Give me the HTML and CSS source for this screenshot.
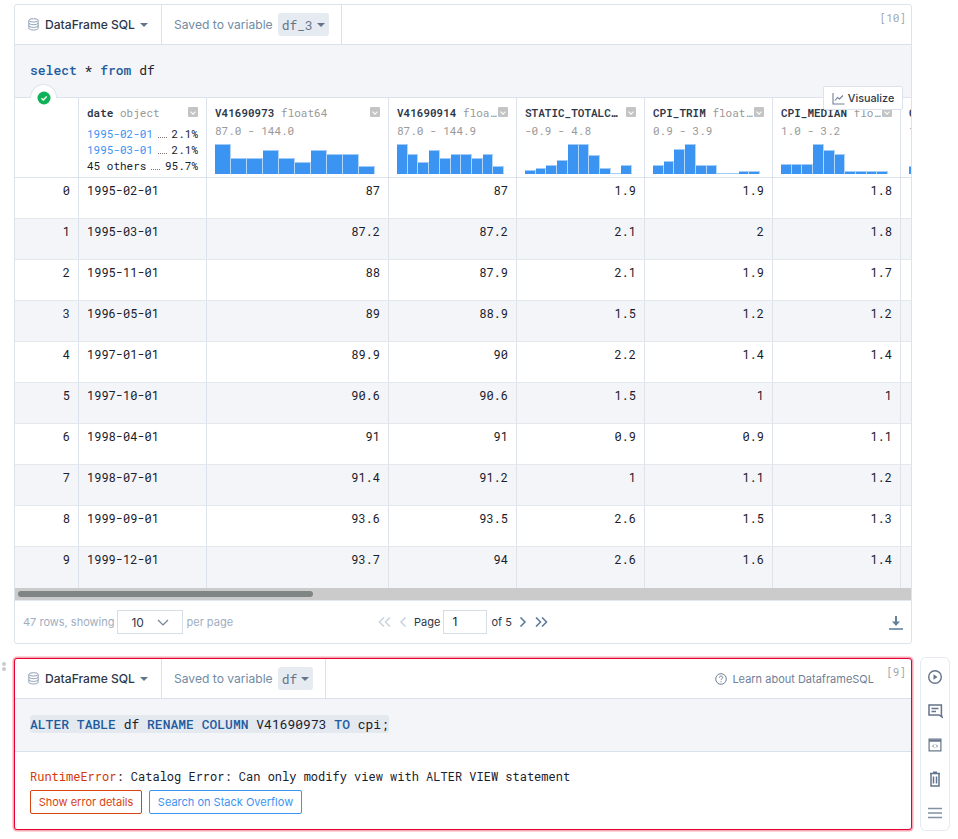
FILE: index.html
```html
<!DOCTYPE html>
<html lang="en">
<head>
<meta charset="utf-8">
<title>DataFrame SQL</title>
<link rel="stylesheet" href="styles.css">
</head>
<body>
<main class="notebook">
  <section class="cell">
    <header class="cell-head">
      <div class="head-part type-part">
        <svg class="db-icon" width="11" height="13" viewBox="0 0 13 15" fill="none" stroke="#8a9bb0" stroke-width="1.100"><ellipse cx="6.500" cy="2.600" rx="5.500" ry="2"/><path d="M1 2.600v9.400c0 1.100 2.400 2 5.500 2s5.500-.9 5.500-2V2.600M1 5.700c0 1.100 2.400 2 5.500 2s5.500-.9 5.500-2M1 8.900c0 1.100 2.400 2 5.500 2s5.500-.9 5.500-2"/></svg>
        <span class="type-name">DataFrame SQL</span><span class="caret wide"></span>
      </div>
      <div class="head-part var-part">
        <span class="var-label">Saved to variable</span>
        <span class="var-pill">df_3<span class="caret"></span></span>
      </div>
      <span class="exec-count">[10]</span>
    </header>
    <div class="code"><span class="kw">select</span> * <span class="kw">from</span> df</div>
    <div class="output">
      <span class="status-tab"><svg width="14" height="14" viewBox="0 0 14 14"><circle cx="7" cy="7" r="6.500" fill="#0fb257"/><path d="M4.400 7.200l1.900 1.800 3.400-3.600" fill="none" stroke="#fff" stroke-width="1.400"/></svg></span>
      <button class="visualize"><svg width="13" height="13" viewBox="0 0 13 13" fill="none" stroke="#718096" stroke-width="1.100"><path d="M1 1v11h11.500M3 8.500l2.500-3 2 1.500L11 3.500"/></svg>Visualize</button>
      <div class="table-clip">
        <table class="grid">
          <colgroup><col class="c-idx"><col class="c-date"><col class="c-wide"><col class="c-n"><col class="c-n"><col class="c-n"><col class="c-n"><col class="c-n"></colgroup>
          <thead>
            <tr>
              <th></th>
              <th>
                <div class="th-title"><span class="col-name">date</span> <span class="col-type">object</span><span class="sort"></span></div>
                <div class="freq link"><span>1995-02-01</span><i></i><span class="pct">2.1%</span></div>
                <div class="freq link"><span>1995-03-01</span><i></i><span class="pct">2.1%</span></div>
                <div class="freq"><span>45 others</span><i></i><span class="pct">95.7%</span></div>
              </th>
              <th>
                <div class="th-title"><span class="col-name">V41690973</span> <span class="col-type">float64</span><span class="sort"></span></div>
                <div class="range">87.0 - 144.0</div>
                <div class="hist"><b style="height:30px"></b><b style="height:16px"></b><b style="height:16px"></b><b style="height:24px"></b><b style="height:16px"></b><b style="height:12px"></b><b style="height:24px"></b><b style="height:20px"></b><b style="height:20px"></b><b style="height:8px"></b></div>
              </th>
              <th>
                <div class="th-title"><span class="col-name">V41690914</span> <span class="col-type">floa…</span><span class="sort"></span></div>
                <div class="range">87.0 - 144.9</div>
                <div class="hist"><b style="height:30px"></b><b style="height:20px"></b><b style="height:12px"></b><b style="height:24px"></b><b style="height:16px"></b><b style="height:20px"></b><b style="height:20px"></b><b style="height:16px"></b><b style="height:20px"></b><b style="height:8px"></b></div>
              </th>
              <th>
                <div class="th-title"><span class="col-name">STATIC_TOTALC…</span><span class="sort"></span></div>
                <div class="range">-0.9 - 4.8</div>
                <div class="hist"><b style="height:4px"></b><b style="height:6px"></b><b style="height:9px"></b><b style="height:14px"></b><b style="height:30px"></b><b style="height:30px"></b><b style="height:19px"></b><b style="height:6px"></b><b style="height:1px"></b><b style="height:9px"></b></div>
              </th>
              <th>
                <div class="th-title"><span class="col-name">CPI_TRIM</span> <span class="col-type">float…</span><span class="sort"></span></div>
                <div class="range">0.9 - 3.9</div>
                <div class="hist"><b style="height:9px"></b><b style="height:13px"></b><b style="height:25px"></b><b style="height:30px"></b><b style="height:9px"></b><b style="height:9px"></b><b style="height:1px"></b><b style="height:1px"></b><b style="height:3px"></b><b style="height:3px"></b></div>
              </th>
              <th>
                <div class="th-title"><span class="col-name">CPI_MEDIAN</span> <span class="col-type">flo…</span><span class="sort"></span></div>
                <div class="range">1.0 - 3.2</div>
                <div class="hist"><b style="height:10px"></b><b style="height:10px"></b><b style="height:10px"></b><b style="height:30px"></b><b style="height:24px"></b><b style="height:20px"></b><b style="height:3px"></b><b style="height:3px"></b><b style="height:3px"></b><b style="height:3px"></b></div>
              </th>
              <th>
                <div class="th-title"><span class="col-name">CPI_COMMON</span></div>
                <div class="range">1.0 - 3.2</div>
                <div class="hist"><b style="height:8px"></b></div>
              </th>
            </tr>
          </thead>
          <tbody>
            <tr><td>0</td><td class="l">1995-02-01</td><td>87</td><td>87</td><td>1.9</td><td>1.9</td><td>1.8</td><td></td></tr>
            <tr><td>1</td><td class="l">1995-03-01</td><td>87.2</td><td>87.2</td><td>2.1</td><td>2</td><td>1.8</td><td></td></tr>
            <tr><td>2</td><td class="l">1995-11-01</td><td>88</td><td>87.9</td><td>2.1</td><td>1.9</td><td>1.7</td><td></td></tr>
            <tr><td>3</td><td class="l">1996-05-01</td><td>89</td><td>88.9</td><td>1.5</td><td>1.2</td><td>1.2</td><td></td></tr>
            <tr><td>4</td><td class="l">1997-01-01</td><td>89.9</td><td>90</td><td>2.2</td><td>1.4</td><td>1.4</td><td></td></tr>
            <tr><td>5</td><td class="l">1997-10-01</td><td>90.6</td><td>90.6</td><td>1.5</td><td>1</td><td>1</td><td></td></tr>
            <tr><td>6</td><td class="l">1998-04-01</td><td>91</td><td>91</td><td>0.9</td><td>0.9</td><td>1.1</td><td></td></tr>
            <tr><td>7</td><td class="l">1998-07-01</td><td>91.4</td><td>91.2</td><td>1</td><td>1.1</td><td>1.2</td><td></td></tr>
            <tr><td>8</td><td class="l">1999-09-01</td><td>93.6</td><td>93.5</td><td>2.6</td><td>1.5</td><td>1.3</td><td></td></tr>
            <tr><td>9</td><td class="l">1999-12-01</td><td>93.7</td><td>94</td><td>2.6</td><td>1.6</td><td>1.4</td><td></td></tr>
          </tbody>
        </table>
      </div>
      <div class="scroll-track"><div class="scroll-thumb"></div></div>
      <footer class="pager">
        <div class="pager-left">
          <span class="muted">47 rows, showing</span>
          <span class="select">10<svg width="12" height="7" viewBox="0 0 12 7" fill="none" stroke="#718096" stroke-width="1.200"><path d="M1 1l5 5 5-5"/></svg></span>
          <span class="muted">per page</span>
        </div>
        <div class="pager-mid">
          <svg class="off" width="14" height="10" viewBox="0 0 14 10"><path d="M6 .5L1.500 5 6 9.500M12 .5L7.500 5l4.500 4.500"/></svg>
          <svg class="off" width="8" height="10" viewBox="0 0 8 10"><path d="M6.500 .5L2 5l4.500 4.500"/></svg>
          <span class="page-word">Page</span>
          <span class="page-input">1</span>
          <span class="page-word">of 5</span>
          <svg class="on" width="8" height="10" viewBox="0 0 8 10"><path d="M1.500 .5L6 5 1.500 9.500"/></svg>
          <svg class="on" width="14" height="10" viewBox="0 0 14 10"><path d="M2 .5L6.500 5 2 9.500M8 .5L12.500 5 8 9.500"/></svg>
        </div>
        <svg class="download" width="14" height="15" viewBox="0 0 14 15"><path d="M7 1v8.500" stroke="#64809c" stroke-width="2" fill="none"/><path d="M3 6.500h8L7 11z" fill="#64809c"/><path d="M0 14h14" stroke="#64809c" stroke-width="1.600"/></svg>
      </footer>
    </div>
  </section>

  <section class="cell cell-error">
    <span class="drag"><i></i><i></i></span>
    <header class="cell-head">
      <div class="head-part type-part">
        <svg class="db-icon" width="11" height="13" viewBox="0 0 13 15" fill="none" stroke="#8a9bb0" stroke-width="1.100"><ellipse cx="6.500" cy="2.600" rx="5.500" ry="2"/><path d="M1 2.600v9.400c0 1.100 2.400 2 5.500 2s5.500-.9 5.500-2V2.600M1 5.700c0 1.100 2.400 2 5.500 2s5.500-.9 5.500-2M1 8.900c0 1.100 2.400 2 5.500 2s5.500-.9 5.500-2"/></svg>
        <span class="type-name">DataFrame SQL</span><span class="caret wide"></span>
      </div>
      <div class="head-part var-part">
        <span class="var-label">Saved to variable</span>
        <span class="var-pill">df<span class="caret"></span></span>
      </div>
      <a class="learn"><svg width="12" height="12" viewBox="0 0 12 12" fill="none" stroke="#718096" stroke-width="1"><circle cx="6" cy="6" r="5.300"/><path d="M4.300 4.700c0-1 .8-1.600 1.700-1.600s1.700.6 1.700 1.500c0 1.200-1.700 1.200-1.700 2.500M6 8.300v1"/></svg>Learn about DataframeSQL</a>
      <span class="exec-count">[9]</span>
    </header>
    <div class="code"><span class="sel"><span class="kw">ALTER</span> <span class="kw">TABLE</span> df <span class="kw">RENAME</span> <span class="kw">COLUMN</span> V41690973 <span class="kw">TO</span> cpi;</span></div>
    <div class="error-out">
      <div class="err-msg"><span class="err-name">RuntimeError</span>: Catalog Error: Can only modify view with ALTER VIEW statement</div>
      <div class="err-actions">
        <button class="btn btn-red">Show error details</button>
        <button class="btn btn-blue">Search on Stack Overflow</button>
      </div>
    </div>
    <aside class="toolbar">
      <svg width="16" height="16" viewBox="0 0 16 16" fill="none" stroke="#64748b" stroke-width="1.400"><circle cx="8" cy="8" r="6.300"/><path d="M6.500 5.300L10.500 8l-4 2.700z" fill="#64748b" stroke="none"/></svg>
      <svg width="16" height="16" viewBox="0 0 16 16" fill="none" stroke="#64748b" stroke-width="1.500"><path d="M2 2h12.400v10l.6 2-3-2H2z"/><path d="M4.500 5.500h7M4.500 8.500h4.500"/></svg>
      <svg width="16" height="16" viewBox="0 0 16 16" fill="none" stroke="#64748b" stroke-width="1.200"><rect x="2.100" y="2.100" width="11.800" height="11.800"/><path d="M2.100 3.700h11.800" stroke-width="2"/><path d="M7 7.500L5.500 9 7 10.500M9 7.500L10.500 9 9 10.500" stroke-width=".9"/></svg>
      <svg width="16" height="16" viewBox="0 0 16 16" fill="none" stroke="#64748b" stroke-width="1.500"><path d="M4 3v12h8V3M3 2.500h10M6 1.200h4M6.500 5.500v7M9.500 5.500v7"/></svg>
      <svg width="16" height="16" viewBox="0 0 16 16" fill="none" stroke="#8291a3" stroke-width="1.600"><path d="M1 3.500h14M1 8h14M1 12.500h14"/></svg>
    </aside>
  </section>
</main>
</body>
</html>
```
FILE: styles.css
```css
* { box-sizing: border-box; }
html, body { margin: 0; padding: 0; background: #fff; }
body { width: 958px; height: 839px; overflow: hidden; font-family: Inter, "Noto Sans", sans-serif; color: #1a202c; }
.notebook { display: flex; flex-direction: column; gap: 14px; padding: 4px 0 0 14px; width: 912px; }
.cell { position: relative; border: 1px solid #dde3ec; border-radius: 3px; background: #fff; }
.cell-error { border-color: #e1002f; box-shadow: 0 0 0 1.500px #f8a9b5; }
.cell-head { display: flex; align-items: stretch; height: 40px; border-bottom: 1px solid #d9e1ea; position: relative; }
.head-part { display: flex; align-items: center; border-right: 1px solid #d9e1ea; font-size: 12.100px; }
.type-part { width: 147px; padding-left: 13px; }
.db-icon { margin-right: 6px; flex: none; }
.type-name { font-weight: 500; color: #2d3748; white-space: nowrap; }
.caret { display: inline-block; width: 0; height: 0; border: 4px solid transparent; border-top: 4px solid #64748b; border-bottom: 0; margin-left: 4px; }
.caret.wide { margin-left: 5px; }
.var-part { padding: 0 12px; }
.var-label { color: #718ba3; white-space: nowrap; }
.var-pill { display: flex; align-items: center; height: 23px; padding: 0 4px; margin-left: 5px; background: #e6ebf1; border-radius: 3px; font-family: "Roboto Mono", "DejaVu Sans Mono", "Liberation Mono", monospace; font-size: 13px; color: #64748b; white-space: nowrap; }
.exec-count { position: absolute; top: 5px; right: 5px; font-family: "Roboto Mono", "DejaVu Sans Mono", monospace; font-size: 11px; color: #a3a9b0; }
.code { height: 52px; padding: 17px 0 0 15px; background: #f3f5f8; font-family: "Roboto Mono", "DejaVu Sans Mono", monospace; font-size: 13px; line-height: 16px; color: #1a202c; white-space: pre; }
.kw { color: #1f5c9f; font-weight: 500; }
.sel { display: inline-block; background: #e4e9f0; border-radius: 3px; line-height: 18px; margin-top: -1px; }
.output { position: relative; }
.status-tab { position: absolute; z-index: 2; left: 15px; top: -13px; width: 27px; height: 14px; background: #fff; border: 1px solid #dde3ec; border-bottom: 0; border-radius: 14px 14px 0 0; }
.status-tab svg { position: absolute; left: 6px; top: 6px; }
.visualize { position: absolute; z-index: 3; top: -11px; right: 8px; width: 80px; height: 24px; display: flex; align-items: center; justify-content: center; gap: 3px; padding: 0; background: #fff; border: 1px solid #dde3ec; border-radius: 2px; font-family: Inter, sans-serif; font-size: 10.800px; font-weight: 500; color: #2d3748; }
.table-clip { width: 896px; overflow: hidden; }
.grid { width: 914px; table-layout: fixed; border-collapse: separate; border-spacing: 0; font-family: "Roboto Mono", "DejaVu Sans Mono", monospace; }
.c-idx { width: 64px; } .c-date { width: 128px; } .c-wide { width: 182px; } .c-n { width: 128px; }
.grid th { height: 81px; padding: 7px 8px 0; vertical-align: top; text-align: left; font-weight: 400; border-top: 1px solid #dde3ec; border-bottom: 1px solid #dde3ec; border-right: 1px solid #dde3ec; font-size: 11px; overflow: hidden; }
.grid td { height: 41px; padding: 4px 8px 0; vertical-align: top; text-align: right; font-size: 12px; line-height: 16px; color: #1a202c; border-bottom: 1px solid #e3e8ef; border-right: 1px solid #dde3ec; }
.grid td.l { text-align: left; }
.grid tbody tr:nth-child(even) td { background: #f3f5f8; }
.grid tbody tr:last-child td { border-bottom: 0; }
.th-title { position: relative; white-space: nowrap; height: 16px; line-height: 15px; margin-bottom: 2px; overflow: hidden; }
.col-name { font-weight: 600; color: #2d3748; }
.col-type { color: #999; }
.sort { position: absolute; right: 0; top: 2px; width: 10px; height: 10px; background: #c4c4c4; border-radius: 1px; }
.sort::after { content: ""; position: absolute; left: 2.500px; top: 2.500px; width: 3px; height: 3px; border-right: 1px solid #fff; border-bottom: 1px solid #fff; transform: rotate(45deg); }
.range { color: #999; height: 16px; line-height: 16px; margin-bottom: 5px; white-space: nowrap; }
.hist { display: flex; align-items: flex-end; height: 30px; width: 160px; }
.hist b { flex: 1; display: block; background: #3b93f2; border-top: 1px solid #a0cbf8; border-right: 1px solid #b5d7fa; }
.grid th:nth-child(n+4) .hist { width: 107px; }
.grid th:nth-child(8) .hist b { flex: none; width: 11px; }
.freq { display: flex; align-items: baseline; height: 16px; line-height: 16px; color: #1a202c; white-space: nowrap; }
.th-title + .freq { margin-top: 5px; }
.freq i { flex: 1; margin: 0 5px; border-bottom: 1px dotted #777; height: 10px; }
.freq.link span:first-child { color: #3b93f2; }
.scroll-track { height: 12px; background: #cbcbcb; padding: 3px; }
.scroll-thumb { width: 295px; height: 6px; background: #7e8584; border-radius: 3px; }
.pager { position: relative; display: flex; align-items: center; height: 43px; border-top: 1px solid #e3e8ef; font-size: 11px; }
.pager-left { display: flex; align-items: center; gap: 3px; padding-left: 8px; }
.muted { color: #a0aec0; white-space: nowrap; }
.select { display: flex; align-items: center; justify-content: space-between; width: 66px; height: 24px; padding: 0 13px; border: 1px solid #d5dde6; font-size: 12px; color: #2d3748; }
.pager-mid { position: absolute; left: 363px; top: 9px; display: flex; align-items: center; gap: 7px; }
.pager-mid svg { fill: none; stroke-width: 1.600; }
.off { stroke: #cbd5e0; }
.on { stroke: #5f7d9b; }
.page-word { color: #2d3748; white-space: nowrap; }
.page-input { display: block; width: 44px; height: 24px; line-height: 22px; margin: 0 -3px 0 -4px; padding-left: 8px; border: 1px solid #d5dde6; font-size: 12px; }
.download { position: absolute; right: 8px; top: 14px; }
.learn { position: absolute; right: 37px; top: 13px; display: flex; align-items: center; gap: 5px; font-size: 11px; color: #718096; white-space: nowrap; }
.error-out { border-top: 1px solid #d9e1ea; height: 78px; padding: 16px 15px 0; }
.err-msg { font-family: "Roboto Mono", "DejaVu Sans Mono", monospace; font-size: 12px; line-height: 16px; color: #1a202c; white-space: nowrap; }
.err-name { color: #d23a0c; }
.err-actions { display: flex; gap: 7px; margin-top: 6px; }
.btn { height: 24px; padding: 0; background: #fff; border: 1px solid; border-radius: 2px; font-family: Inter, sans-serif; font-size: 11px; }
.btn-red { width: 112px; color: #d9430f; border-color: #d9430f; }
.btn-blue { width: 153px; color: #3b93f2; border-color: #3b93f2; }
.drag { position: absolute; left: -13px; top: 3px; display: flex; flex-direction: column; gap: 1px; }
.drag i { display: block; width: 4px; height: 4px; background: #c4cbd3; border-radius: 50%; }
.toolbar { position: absolute; left: 905px; top: -2px; width: 30px; height: 174px; padding-top: 11px; display: flex; flex-direction: column; align-items: center; gap: 18px; border: 1px solid #e6eaf0; border-radius: 6px; background: #fff; }
```
